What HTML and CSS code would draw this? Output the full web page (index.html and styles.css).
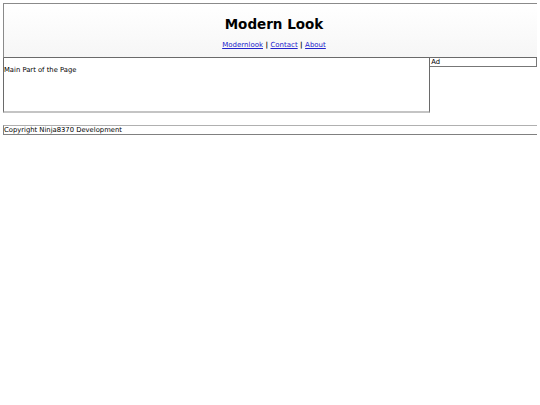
FILE: index.html
```html
<!DOCTYPE html>
<html>
<head>
<meta charset="utf-8">
<link rel="stylesheet" href="styles.css">
</head>
<body>
<div class="header">
  <h1 class="title">Modern Look</h1>
  <div class="nav"><a href="#">Modernlook</a> | <a href="#">Contact</a> | <a href="#">About</a></div>
</div>
<div class="row">
  <div class="main">Main Part of the Page</div>
  <div class="ad">Ad</div>
</div>
<div class="footer">Copyright Ninja8370 Development</div>
</body>
</html>
```
FILE: styles.css
```css
body {
  margin: 3px;
  font-family: "DejaVu Sans", Verdana, sans-serif;
  font-size: 6.8px;
  color: #000;
  background: #fff;
}
.header {
  width: 540px;
  height: 53px;
  border-top: 1px solid #8a8a8a;
  border-left: 1px solid #8a8a8a;
  border-bottom: 1px solid #6a6a6a;
  background: linear-gradient(#ffffff, #f6f6f6);
  text-align: center;
  box-sizing: content-box;
}
.title {
  margin: 0;
  padding-top: 12px;
  font-size: 13.5px;
  font-weight: bold;
  line-height: 16px;
}
.nav {
  margin-top: 9px;
  font-weight: bold;
  font-size: 7px;
  line-height: 9px;
}
.nav a {
  color: #2222cc;
  font-weight: normal;
}
.row {
  display: flex;
  align-items: flex-start;
}
.main {
  width: 428px;
  height: 55px;
  border-left: 1px solid #6a6a6a;
  border-right: 1px solid #6a6a6a;
  border-bottom: 2px solid #c4c4c4;
  line-height: 9px;
  padding-top: 8px;
  box-sizing: border-box;
}
.ad {
  width: 107px;
  height: 9px;
  border-right: 1px solid #777;
  border-bottom: 1px solid #777;
  line-height: 8px;
  box-sizing: border-box;
  padding-left: 1px;
}
.footer {
  margin-top: 12px;
  width: 535px;
  height: 10px;
  border: 1px solid #808080;
  border-top-color: #b0b0b0;
  line-height: 8px;
  box-sizing: border-box;
}
```
